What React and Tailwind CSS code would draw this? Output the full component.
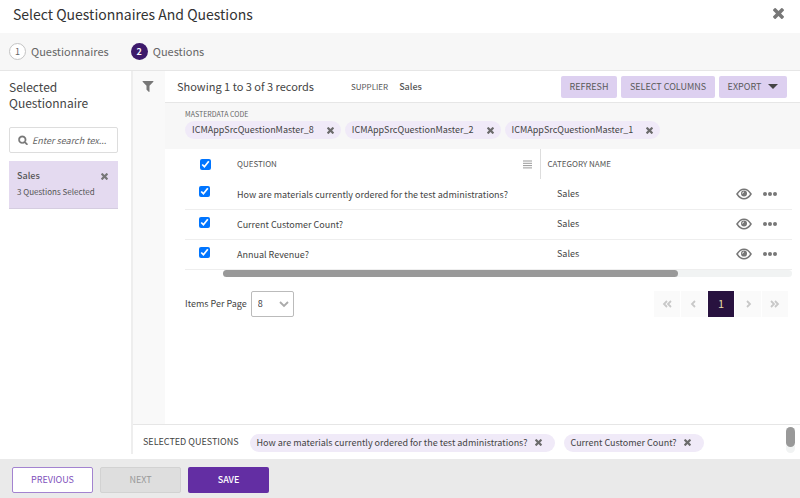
import clsx from 'clsx';

const FilterIcon = ({ className }) => (
    <svg className={className} viewBox="0 0 1792 1792" fill="currentColor" aria-hidden="true">
        <path d="M1595 295q17 41-14 70l-493 493v742q0 42-39 59-13 5-25 5-27 0-45-19l-256-256q-19-19-19-45v-486l-493-493q-31-29-14-70 17-39 59-39h1280q42 0 59 39z" />
    </svg>
);

const SearchIcon = ({ className }) => (
    <svg className={className} viewBox="0 0 1792 1792" fill="currentColor" stroke="currentColor" strokeWidth="60" aria-hidden="true">
        <path d="M1216 832q0-185-131.5-316.5t-316.5-131.5-316.5 131.5-131.5 316.5 131.5 316.5 316.5 131.5 316.5-131.5 131.5-316.5zm512 832q0 52-38 90t-90 38q-54 0-90-38l-343-342q-179 124-399 124-143 0-273.5-55.5t-225-150-150-225-55.5-273.5 55.5-273.5 150-225 225-150 273.5-55.5 273.5 55.5 225 150 150 225 55.5 273.5q0 220-124 399l343 343q37 37 37 90z" />
    </svg>
);

const TimesIcon = ({ className }) => (
    <svg className={className} viewBox="302 366 1188 1188" fill="currentColor" aria-hidden="true">
        <path d="M1490 1322q0 40-28 68l-136 136q-28 28-68 28t-68-28l-294-294-294 294q-28 28-68 28t-68-28l-136-136q-28-28-28-68t28-68l294-294-294-294q-28-28-28-68t28-68l136-136q28-28 68-28t68 28l294 294 294-294q28-28 68-28t68 28l136 136q28 28 28 68t-28 68l-294 294 294 294q28 28 28 68z" />
    </svg>
);

const EyeIcon = ({ className }) => (
    <svg className={className} viewBox="0 0 16 12" fill="none" stroke="currentColor" aria-hidden="true">
        <path d="M1 6Q4 1.2 8 1.2T15 6Q12 10.8 8 10.8T1 6z" strokeWidth="1.5" />
        <circle cx="8" cy="5.6" r="3" fill="currentColor" stroke="none" />
        <path d="M6.4 5.6A1.7 1.7 0 0 1 8 4" stroke="#fff" strokeWidth="0.9" />
    </svg>
);

const DotsIcon = ({ className }) => (
    <svg className={className} viewBox="0 0 14 4" fill="currentColor" aria-hidden="true">
        <circle cx="2" cy="2" r="2" />
        <circle cx="7" cy="2" r="2" />
        <circle cx="12" cy="2" r="2" />
    </svg>
);

const MenuIcon = ({ className }) => (
    <svg className={className} viewBox="0 0 9 9" fill="none" stroke="currentColor" aria-hidden="true">
        <path d="M0 1h9M0 3.3h9M0 5.6h9M0 7.9h9" />
    </svg>
);

const Chevron = ({ d, className }) => (
    <svg className={className} viewBox="0 0 10 10" fill="none" stroke="currentColor" strokeWidth="1.8" aria-hidden="true">
        <path d={d} />
    </svg>
);

const codes = ['ICMAppSrcQuestionMaster_8', 'ICMAppSrcQuestionMaster_2', 'ICMAppSrcQuestionMaster_1'];

const questions = [
    { id: 1, text: 'How are materials currently ordered for the test administrations?', category: 'Sales' },
    { id: 2, text: 'Current Customer Count?', category: 'Sales' },
    { id: 3, text: 'Annual Revenue?', category: 'Sales' },
];

const pages = [
    { label: 'First page', d: 'M5 2L2 5l3 3M9 2L6 5l3 3' },
    { label: 'Previous page', d: 'M6 2L3 5l3 3' },
    { label: 'Page 1', current: true },
    { label: 'Next page', d: 'M4 2l3 3-3 3' },
    { label: 'Last page', d: 'M1 2l3 3-3 3M5 2l3 3-3 3' },
];

function Chip({ label, className }) {
    return (
        <span className={clsx('flex h-[18px] items-center rounded-full bg-[#f0eaf8] pl-[7px] text-[9px] leading-[18px] whitespace-nowrap text-[#444]', className)}>
            {label}
            <button type="button" aria-label={`Remove ${label}`} className="text-[#6b6b6b]">
                <TimesIcon className="size-[7px]" />
            </button>
        </span>
    );
}

function ToolbarButton({ children, className }) {
    return (
        <button type="button" className={clsx('flex h-[22px] items-center justify-center rounded-xs bg-[#ddd0f0] text-[9px] text-[#5a5a5a]', className)}>
            {children}
        </button>
    );
}

export default function App() {
    return (
        <div className="flex min-h-screen flex-col bg-white font-['Noto_Sans_CJK_SC','Noto_Sans',sans-serif] text-[9px] text-[#444]">
            <header className="flex h-[33px] items-center justify-between pr-4 pb-[6px] pl-[13px]">
                <h1 className="text-[14px] leading-5 text-[#333]">Select Questionnaires And Questions</h1>
                <button type="button" aria-label="Close" className="text-[#777]">
                    <TimesIcon className="size-[11px]" />
                </button>
            </header>

            <ol className="flex h-[38px] items-center gap-[22px] border-b border-[#e6e6e6] bg-[#f7f7f7] px-[9px] text-[11px] text-[#666]">
                <li className="flex items-center gap-[5px]">
                    <span className="flex size-[17px] items-center justify-center rounded-full border border-[#c4c4c4] bg-white text-[9px] leading-4">1</span>
                    Questionnaires
                </li>
                <li className="flex items-center gap-[5px]">
                    <span className="flex size-[17px] items-center justify-center rounded-full bg-[#3d1a6b] text-[9px] leading-4 font-bold text-white">2</span>
                    Questions
                </li>
            </ol>

            <div className="flex flex-1 pb-[5px]">
                <aside className="w-[131px] shrink-0 pt-2 pr-[13px] pl-[9px]">
                    <h2 className="text-[12px] leading-4 text-[#444]">Selected Questionnaire</h2>
                    <div className="mt-4 flex h-[26px] items-center gap-1 rounded-xs border border-[#ddd] pr-px pl-2 text-[#777]">
                        <SearchIcon className="size-[10px] shrink-0" />
                        <input type="text" aria-label="Search questionnaires" placeholder="Enter search tex..." className="h-5 w-full min-w-0 text-[9px] italic outline-none placeholder:text-[#666]" />
                    </div>
                    <div className="mt-2 h-12 border-b border-[#d5cde0] bg-[#e4daf0] px-2 pt-[7px]">
                        <div className="flex items-center justify-between">
                            <span className="leading-4 font-medium text-[#555]">Sales</span>
                            <button type="button" aria-label="Remove Sales" className="mr-[2px] text-[#777]">
                                <TimesIcon className="size-[7px]" />
                            </button>
                        </div>
                        <p className="text-[8px] leading-4 text-[#555]">3 Questions Selected</p>
                    </div>
                </aside>

                <div className="flex min-w-0 flex-1 flex-col border-l-2 border-[#eee]">
                    <div className="flex flex-1">
                        <div className="w-8 shrink-0 bg-[#f9f9f9] pt-2 pl-2">
                            <button type="button" aria-label="Filter" className="block text-[#777]">
                                <FilterIcon className="size-[14px]" />
                            </button>
                        </div>

                        <main className="min-w-0 flex-1">
                            <div className="flex h-8 items-center border-b border-[#e6e6e6] pr-[13px] pl-3">
                                <span className="text-[11px]">Showing 1 to 3 of 3 records</span>
                                <span className="ml-[37px] text-[8px] text-[#555]">SUPPLIER</span>
                                <span className="ml-[11px] font-medium text-[#555]">Sales</span>
                                <div className="ml-auto flex gap-1">
                                    <ToolbarButton className="w-14">REFRESH</ToolbarButton>
                                    <ToolbarButton className="w-[94px]">SELECT COLUMNS</ToolbarButton>
                                    <ToolbarButton className="w-[68px] gap-[7px]">
                                        EXPORT
                                        <svg className="h-[5px] w-[10px]" viewBox="0 0 10 5" fill="#444" aria-hidden="true">
                                            <path d="M0 0h10L5 5z" />
                                        </svg>
                                    </ToolbarButton>
                                </div>
                            </div>

                            <section className="h-[46px] bg-[#f7f7f7] pt-[5px] pl-5">
                                <h3 className="text-[7px] leading-[13px] text-[#666]">MASTERDATA CODE</h3>
                                <div className="flex gap-1">
                                    {codes.map((code) => (
                                        <Chip key={code} label={code} className="gap-[13px] pr-[7px]" />
                                    ))}
                                </div>
                            </section>

                            <div className="pr-2 pl-5">
                                <table className="w-full table-fixed text-left">
                                    <colgroup>
                                        <col className="w-11" />
                                        <col />
                                        <col className="w-[252px]" />
                                    </colgroup>
                                    <thead>
                                        <tr className="h-[30px] text-[8px] text-[#555]">
                                            <th className="pl-[15px]">
                                                <input type="checkbox" defaultChecked aria-label="Select all questions" className="block size-[11px]" />
                                            </th>
                                            <th className="pr-2 pl-2 font-normal">
                                                <div className="flex items-center justify-between">
                                                    QUESTION
                                                    <MenuIcon className="size-[9px] text-[#999]" />
                                                </div>
                                            </th>
                                            <th className="border-l border-[#ddd] pl-[7px] font-normal">CATEGORY NAME</th>
                                        </tr>
                                    </thead>
                                    <tbody>
                                        {questions.map((q) => (
                                            <tr key={q.id} className="h-[30px] border-b border-[#eee]">
                                                <td className="pb-1 pl-[14px]">
                                                    <input type="checkbox" id={`question-${q.id}`} defaultChecked className="block size-[11px]" />
                                                </td>
                                                <td className="pt-px pl-2">
                                                    <label htmlFor={`question-${q.id}`}>{q.text}</label>
                                                </td>
                                                <td className="pl-[17px]">
                                                    <div className="flex items-center">
                                                        <span>{q.category}</span>
                                                        <button type="button" aria-label="View question" className="ml-auto text-[#777]">
                                                            <EyeIcon className="h-3 w-4" />
                                                        </button>
                                                        <button type="button" aria-label="More actions" className="mr-[15px] ml-[11px] text-[#777]">
                                                            <DotsIcon className="h-1 w-[14px]" />
                                                        </button>
                                                    </div>
                                                </td>
                                            </tr>
                                        ))}
                                    </tbody>
                                </table>
                                <div className="ml-[38px] h-[7px] rounded-full bg-[#f1f3f3]">
                                    <div className="h-full w-4/5 rounded-full bg-[#999]" />
                                </div>

                                <div className="mt-[14px] flex items-center justify-between pr-1">
                                    <div className="flex items-center gap-1">
                                        <label htmlFor="page-size">Items Per Page</label>
                                        <span className="relative">
                                            <select id="page-size" defaultValue="8" className="h-[26px] w-[43px] appearance-none rounded-xs border border-[#bbb] bg-white pl-[6px] text-[9px]">
                                                <option>8</option>
                                                <option>16</option>
                                                <option>32</option>
                                            </select>
                                            <Chevron d="M1 3l4 4 4-4" className="pointer-events-none absolute top-1/2 right-[5px] size-[10px] -translate-y-1/2 text-[#aaa]" />
                                        </span>
                                    </div>
                                    <nav aria-label="Pagination" className="flex gap-px">
                                        {pages.map((page) => (
                                            <button
                                                key={page.label}
                                                type="button"
                                                aria-label={page.label}
                                                className={clsx(
                                                    'flex size-[26px] items-center justify-center',
                                                    page.current ? 'bg-[#28123f] text-[11px] text-[#e6d9a8]' : 'bg-[#fafafa] text-[#c8c8c8]',
                                                )}
                                            >
                                                {page.current ? '1' : <Chevron d={page.d} className="size-[10px]" />}
                                            </button>
                                        ))}
                                    </nav>
                                </div>
                            </div>
                        </main>
                    </div>

                    <section className="flex h-[30px] items-center border-t border-[#e6e6e6] pr-[5px] pl-[10px]">
                        <h3 className="pt-1">SELECTED QUESTIONS</h3>
                        <div className="ml-[11px] flex gap-[9px] pt-[6px]">
                            <Chip label={questions[0].text} className="gap-[7px] pr-[13px]" />
                            <Chip label={questions[1].text} className="gap-[7px] pr-[13px]" />
                        </div>
                        <div className="ml-auto h-[26px] w-[9px] rounded-full bg-[#f1f3f3]">
                            <div className="h-5 rounded-full bg-[#999]" />
                        </div>
                    </section>
                </div>
            </div>

            <footer className="flex h-[39px] gap-[7px] bg-[#eaeaea] px-[12px] pt-2">
                <button type="button" className="h-[26px] w-[81px] rounded-xs border border-[#a383d0] bg-white text-[#7f51bb]">PREVIOUS</button>
                <button type="button" disabled className="h-[26px] w-[81px] rounded-xs border border-[#d2d2d2] bg-[#dedede] text-[#999]">NEXT</button>
                <button type="button" className="h-[26px] w-[81px] rounded-xs bg-[#632ea3] font-medium text-white">SAVE</button>
            </footer>
        </div>
    );
}
